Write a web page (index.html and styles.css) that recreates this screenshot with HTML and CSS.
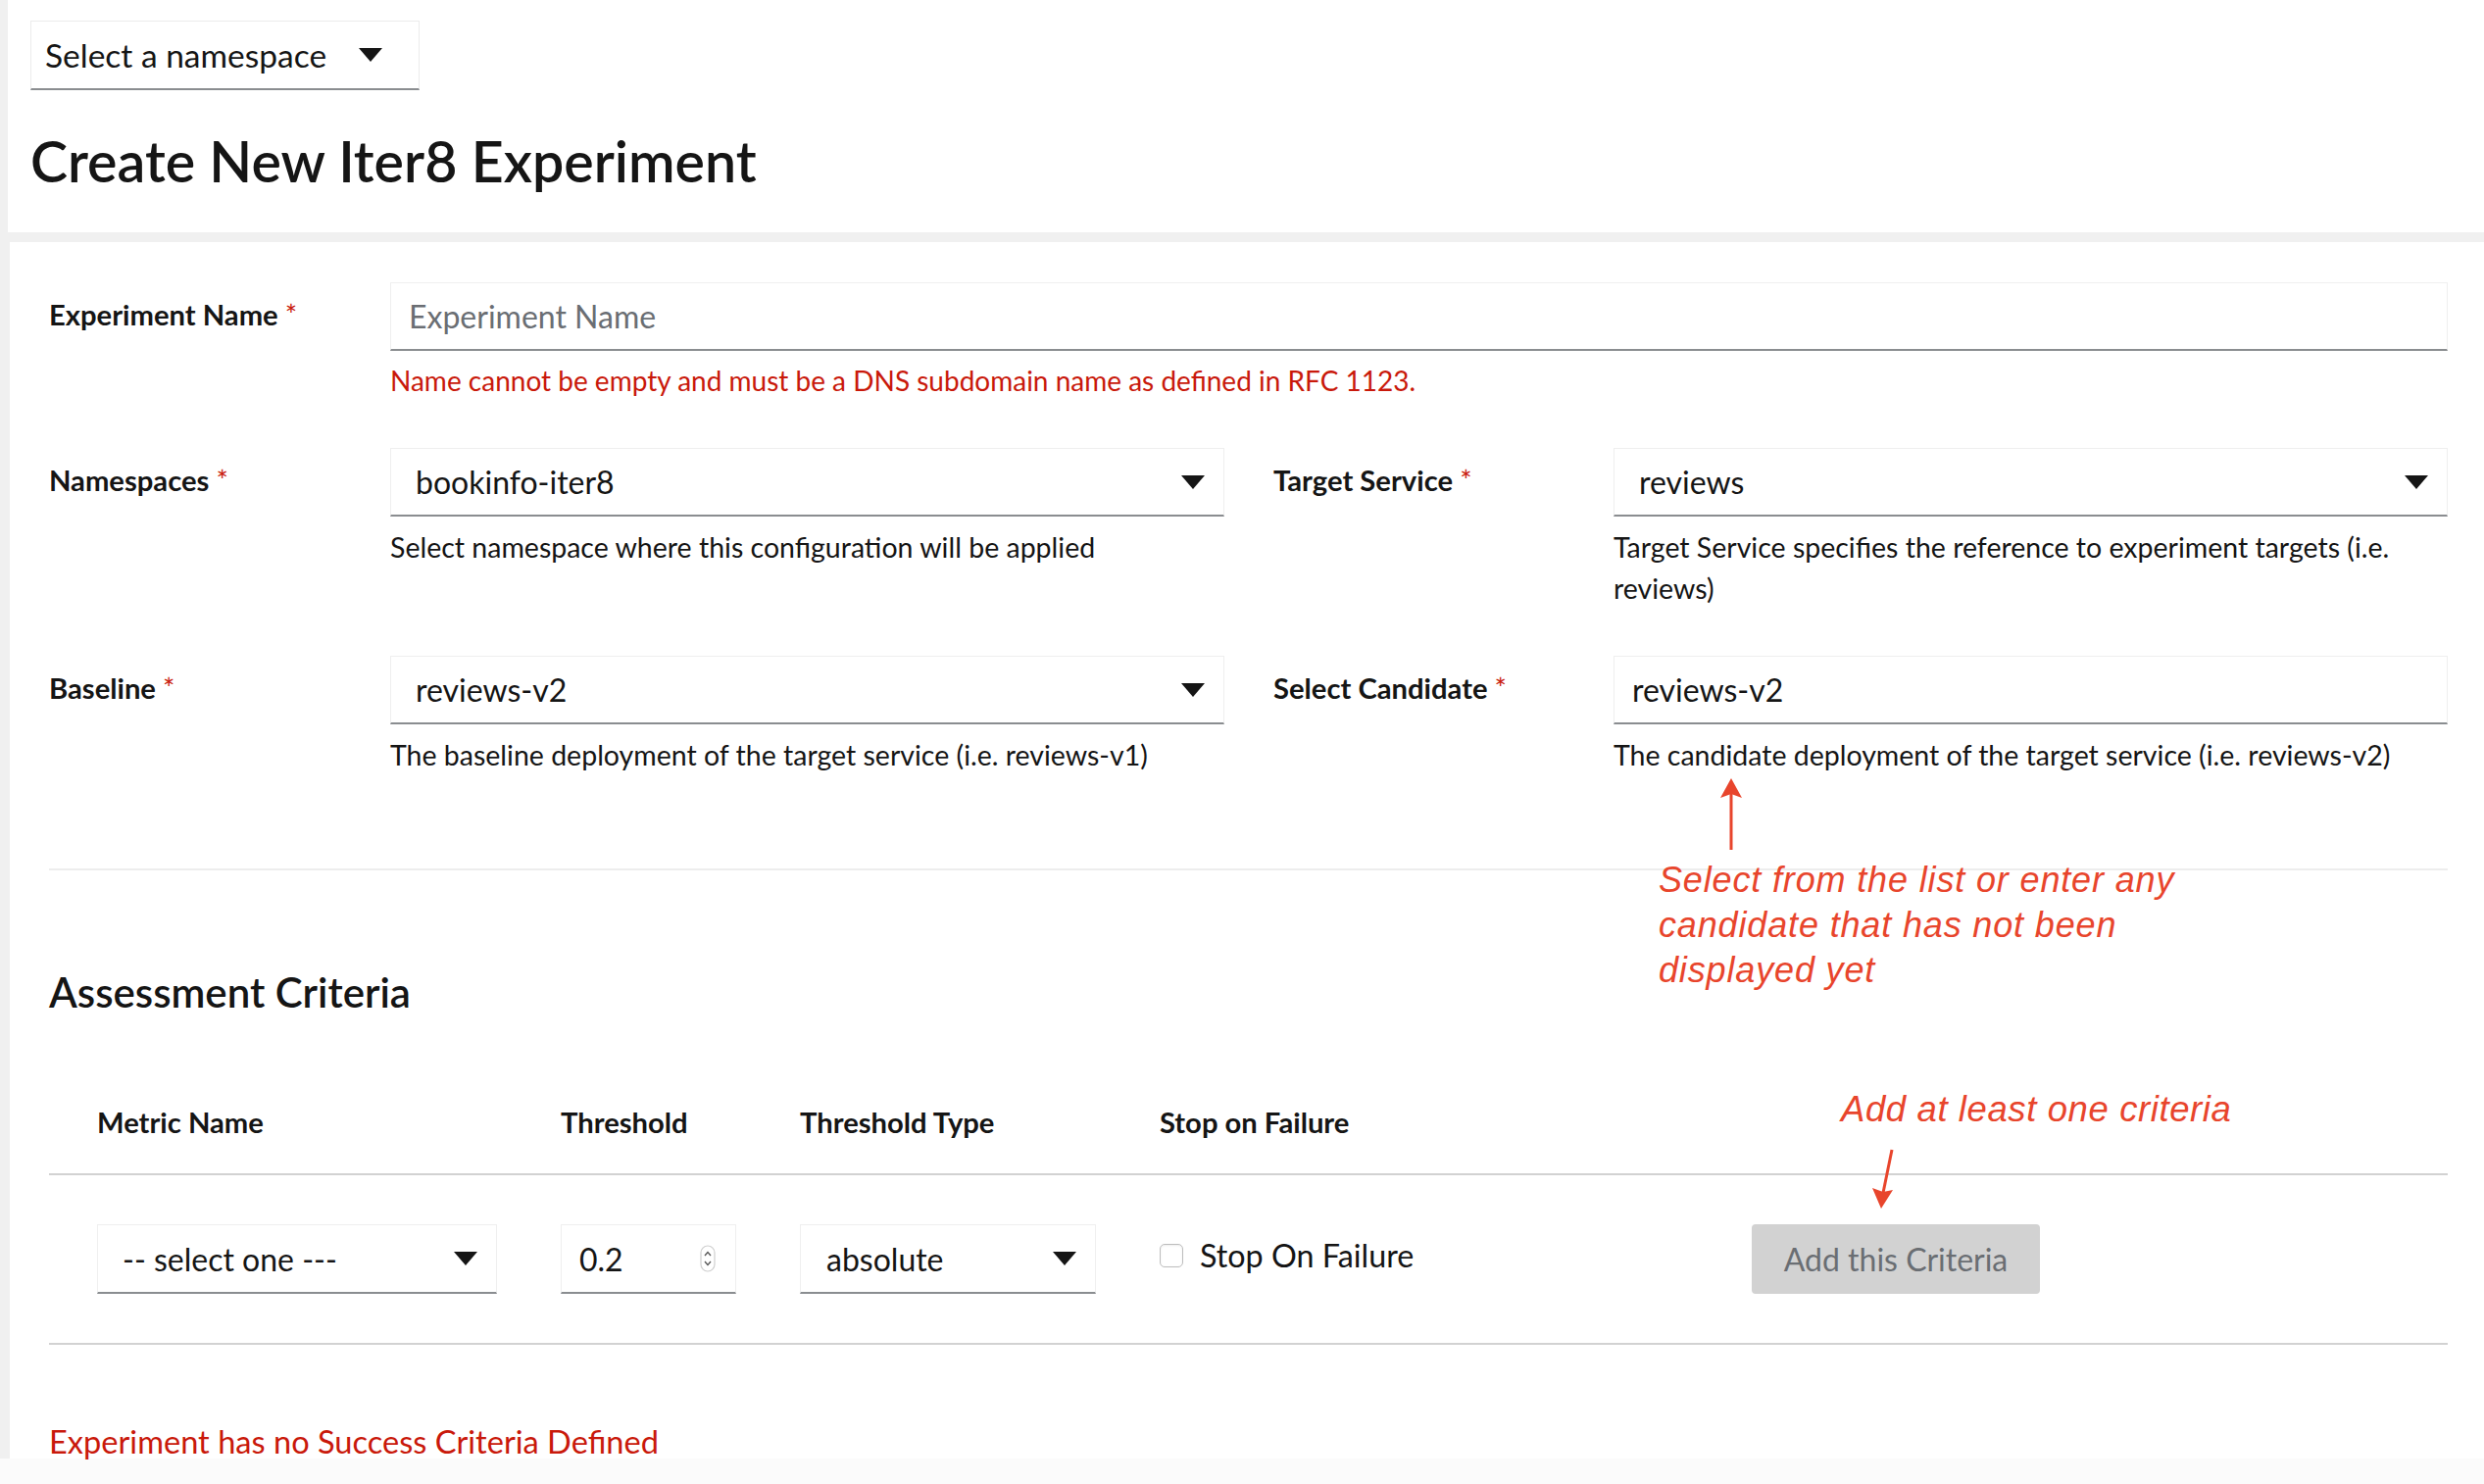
FILE: index.html
```html
<!DOCTYPE html>
<html lang="en">
<head>
<meta charset="utf-8">
<title>Create New Iter8 Experiment</title>
<link rel="stylesheet" href="styles.css">
</head>
<body>
<div class="page">
<header class="top">
  <div class="ns-toggle"><span>Select a namespace</span><span class="caret"></span></div>
  <h1 class="title">Create New Iter8 Experiment</h1>
</header>
<main class="card">
  <div class="form-grid">
    <div class="label">Experiment Name <span class="req">*</span></div>
    <div class="field span3">
      <div class="control"><span class="placeholder">Experiment Name</span></div>
      <div class="error">Name cannot be empty and must be a DNS subdomain name as defined in RFC 1123.</div>
    </div>

    <div class="label">Namespaces <span class="req">*</span></div>
    <div class="field">
      <div class="control select"><span>bookinfo-iter8</span><span class="caret"></span></div>
      <div class="help">Select namespace where this configuration will be applied</div>
    </div>
    <div class="label">Target Service <span class="req">*</span></div>
    <div class="field">
      <div class="control select"><span>reviews</span><span class="caret"></span></div>
      <div class="help">Target Service specifies the reference to experiment targets (i.e.<br>reviews)</div>
    </div>

    <div class="label">Baseline <span class="req">*</span></div>
    <div class="field">
      <div class="control select"><span>reviews-v2</span><span class="caret"></span></div>
      <div class="help">The baseline deployment of the target service (i.e. reviews-v1)</div>
    </div>
    <div class="label">Select Candidate <span class="req">*</span></div>
    <div class="field">
      <div class="control text"><span>reviews-v2</span></div>
      <div class="help">The candidate deployment of the target service (i.e. reviews-v2)</div>
    </div>
  </div>

  <div class="divider"></div>

  <h2 class="section-title">Assessment Criteria</h2>

  <div class="criteria">
    <div class="crit-row crit-head">
      <div>Metric Name</div>
      <div>Threshold</div>
      <div>Threshold Type</div>
      <div>Stop on Failure</div>
      <div></div>
    </div>
    <div class="crit-row crit-body">
      <div><div class="control select metric"><span>-- select one ---</span><span class="caret"></span></div></div>
      <div>
        <div class="control number"><span>0.2</span>
          <svg class="spinner" width="16" height="28" viewBox="0 0 16 28"><rect x="1" y="1" width="14" height="26" rx="7" fill="#fff" stroke="#cfcfcf" stroke-width="1.2"/><path d="M5 11 L8 7.5 L11 11" fill="none" stroke="#555" stroke-width="1.3"/><path d="M5 17 L8 20.5 L11 17" fill="none" stroke="#555" stroke-width="1.3"/></svg>
        </div>
      </div>
      <div><div class="control select ttype"><span>absolute</span><span class="caret"></span></div></div>
      <div class="check-cell"><span class="checkbox"></span><span>Stop On Failure</span></div>
      <div><div class="btn-disabled">Add this Criteria</div></div>
    </div>
  </div>

  <p class="no-criteria">Experiment has no Success Criteria Defined</p>

  <svg class="arrow arrow-up" width="26" height="76" viewBox="0 0 26 76"><path d="M13 74 L13 16" stroke="#e8452c" stroke-width="3" fill="none"/><path d="M13 1 L24 21 L13 17 L2 21 Z" fill="#e8452c"/></svg>
  <div class="annot annot-cand">Select from the list or enter any<br>candidate that has not been<br>displayed yet</div>

  <div class="annot annot-add">Add at least one criteria</div>
  <svg class="arrow arrow-down" width="30" height="64" viewBox="0 0 30 64"><path d="M24 2 L15 46" stroke="#e8452c" stroke-width="3" fill="none"/><path d="M13 62 L4 41 L15 45 L25 43 Z" fill="#e8452c"/></svg>
</main>
</div>
</body>
</html>
```
FILE: styles.css
```css
* { box-sizing: border-box; }
html, body { margin: 0; padding: 0; }
body {
  background: #fbfbfb;
  font-family: Lato, "Liberation Sans", sans-serif;
  color: #151515;
  width: 2534px;
  height: 1514px;
  overflow: hidden;
}
.page {
  background: #f0f0f0;
  height: 1488px;
}

.top {
  background: #fff;
  margin-left: 8px;
  height: 237px;
  padding: 21px 0 0 23px;
}
.ns-toggle {
  width: 397px;
  height: 71px;
  display: flex;
  align-items: center;
  padding: 0 37px 0 14px;
  border: 1px solid #ebebeb;
  border-bottom: 2px solid #8a8d90;
  font-size: 33.5px;
  background: #fff;
}
.ns-toggle .caret { margin-left: auto; }

.caret {
  width: 0;
  height: 0;
  border-left: 12px solid transparent;
  border-right: 12px solid transparent;
  border-top: 14px solid #151515;
  flex: none;
}

.title {
  margin: 38px 0 0 0;
  font-size: 57.3px;
  line-height: 68px;
  font-weight: 600;
}

.card {
  position: relative;
  background: #fff;
  margin: 10px 0 0 10px;
  height: 1241px;
  padding: 41px 37px 0 40px;
}

.form-grid {
  display: grid;
  grid-template-columns: 298px 1fr 297px 1fr;
  column-gap: 50px;
  row-gap: 48px;
}
.span3 { grid-column: span 3; }
.label {
  font-size: 29.2px;
  font-weight: 700;
  line-height: 42px;
  padding-top: 12px;
}
.req { color: #c9190b; font-weight: 400; }

.control {
  height: 70px;
  display: flex;
  align-items: center;
  border: 1px solid #efefef;
  border-bottom: 2px solid #8a8d90;
  font-size: 32px;
  padding: 0 19px 0 18px;
  background: #fff;
}
.control.select { padding-left: 25px; }
.control.select .caret { margin-left: auto; }
.placeholder { color: #6a6e73; }

.help, .error {
  margin-top: 10px;
  font-size: 28.5px;
  line-height: 42px;
}
.error { color: #c9190b; margin-top: 9px; font-size: 28px; }

.divider {
  margin-top: 95px;
  height: 2px;
  background: #ededed;
}

.section-title {
  margin: 100px 0 0 0;
  font-size: 42px;
  line-height: 48px;
  font-weight: 600;
}

.criteria { margin-top: 55px; }
.crit-row {
  display: grid;
  grid-template-columns: 473px 244px 367px 604px 1fr;
  padding-left: 49px;
  align-items: center;
  border-bottom: 2px solid #d2d2d2;
}
.crit-head {
  height: 108px;
  font-size: 29.2px;
  font-weight: 700;
}
.crit-body { height: 173px; }
.control.metric { width: 408px; height: 71px; }
.control.number { width: 179px; height: 71px; padding-right: 20px; }
.control.number .spinner { margin-left: auto; }
.control.ttype { width: 302px; height: 71px; padding-left: 26px; }

.check-cell {
  display: flex;
  align-items: center;
  gap: 17px;
  font-size: 32.3px;
  margin-top: -8px;
}
.checkbox {
  width: 24px;
  height: 24px;
  border: 1.5px solid #bdbdbd;
  border-radius: 5px;
  box-shadow: inset 0 1px 2px rgba(0,0,0,0.08);
  background: #fff;
  flex: none;
}
.btn-disabled {
  width: 294px;
  height: 71px;
  background: #d2d2d2;
  color: #6a6e73;
  border-radius: 4px;
  display: flex;
  align-items: center;
  justify-content: center;
  font-size: 32px;
}

.no-criteria {
  margin: 78px 0 0 0;
  color: #c9190b;
  font-size: 32.6px;
  line-height: 42px;
}

.annot {
  position: absolute;
  color: #e8452c;
  font-family: "Liberation Sans", Arial, sans-serif;
  font-style: italic;
  font-size: 36px;
  line-height: 46px;
  letter-spacing: 0.85px;
  white-space: nowrap;
}
.annot-cand { left: 1682px; top: 628px; }
.annot-add { left: 1868px; top: 862px; font-size: 36.5px; letter-spacing: 0.6px; }
.arrow { position: absolute; }
.arrow-up { left: 1743px; top: 546px; }
.arrow-down { left: 1896px; top: 924px; }
```
